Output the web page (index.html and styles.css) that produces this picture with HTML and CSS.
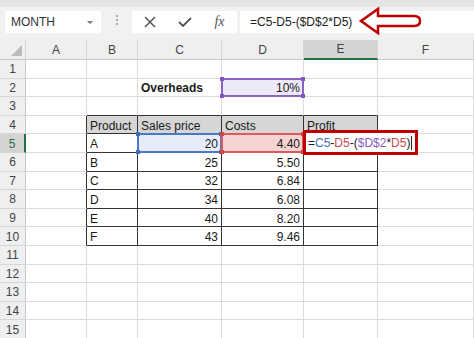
FILE: index.html
```html
<!DOCTYPE html>
<html lang="en">
<head>
    <meta charset="UTF-8">
    <title>Profit formula</title>
    <link rel="stylesheet" href="styles.css">
</head>
<body>

<div class="toolbar">
    <div class="namebox"><span>MONTH</span><span class="caret"></span></div>
    <div class="grip"><i></i><i></i><i></i></div>
    <div class="fbtns">
        <svg width="12" height="12" viewBox="0 0 12 12"><path d="M1 1 L11 11 M11 1 L1 11" stroke="#555" stroke-width="1.5" fill="none"/></svg>
        <svg width="14" height="10" viewBox="0 0 14 10"><path d="M1 5 L5 9 L13 1" stroke="#555" stroke-width="1.8" fill="none"/></svg>
        <span class="fx">fx</span>
    </div>
    <div class="fbar">=C5-D5-($D$2*D5)</div>
    <svg class="arrow" width="68" height="38" viewBox="356 2 68 38">
        <path d="M361 21 L378 9 L378 16 L414 16 Q420 16 420 21 Q420 26 414 26 L378 26 L378 33 Z" fill="#fff" stroke="#c00000" stroke-width="2.5" stroke-linejoin="miter"/>
    </svg>
</div>

<div class="sheet">
    <div class="h corner"></div>
    <div class="h">A</div><div class="h">B</div><div class="h">C</div><div class="h">D</div><div class="h sel">E</div><div class="h">F</div>

    <div class="rh">1</div>
    <div class="c"></div><div class="c"></div><div class="c"></div><div class="c"></div><div class="c"></div><div class="c"></div>

    <div class="rh">2</div>
    <div class="c"></div><div class="c"></div><div class="c bold">Overheads</div>
    <div class="c num ref"><span class="hl purple"></span><span class="val">10%</span></div>
    <div class="c"></div><div class="c"></div>

    <div class="rh">3</div>
    <div class="c"></div><div class="c tt"></div><div class="c tt"></div><div class="c tt"></div><div class="c tt"></div><div class="c"></div>

    <div class="rh">4</div>
    <div class="c tl"></div><div class="c t th">Product</div><div class="c t th">Sales price</div><div class="c t th">Costs</div><div class="c t th">Profit</div><div class="c"></div>

    <div class="rh sel">5</div>
    <div class="c tl"></div><div class="c t">A</div>
    <div class="c t num ref"><span class="hl blue"></span><span class="val">20</span></div>
    <div class="c t num ref"><span class="hl red"></span><span class="val">4.40</span></div>
    <div class="c t ref">
        <div class="editor">=<b class="r-blue">C5</b>-<b class="r-red">D5</b>-(<b class="r-purple">$D$2</b>*<b class="r-red">D5</b>)<span class="cursor"></span></div>
    </div>
    <div class="c"></div>

    <div class="rh">6</div>
    <div class="c tl"></div><div class="c t">B</div><div class="c t num">25</div><div class="c t num">5.50</div><div class="c t"></div><div class="c"></div>

    <div class="rh">7</div>
    <div class="c tl"></div><div class="c t">C</div><div class="c t num">32</div><div class="c t num">6.84</div><div class="c t"></div><div class="c"></div>

    <div class="rh">8</div>
    <div class="c tl"></div><div class="c t">D</div><div class="c t num">34</div><div class="c t num">6.08</div><div class="c t"></div><div class="c"></div>

    <div class="rh">9</div>
    <div class="c tl"></div><div class="c t">E</div><div class="c t num">40</div><div class="c t num">8.20</div><div class="c t"></div><div class="c"></div>

    <div class="rh">10</div>
    <div class="c tl"></div><div class="c t">F</div><div class="c t num">43</div><div class="c t num">9.46</div><div class="c t"></div><div class="c"></div>

    <div class="rh">11</div>
    <div class="c"></div><div class="c"></div><div class="c"></div><div class="c"></div><div class="c"></div><div class="c"></div>

    <div class="rh">12</div>
    <div class="c"></div><div class="c"></div><div class="c"></div><div class="c"></div><div class="c"></div><div class="c"></div>

    <div class="rh">13</div>
    <div class="c"></div><div class="c"></div><div class="c"></div><div class="c"></div><div class="c"></div><div class="c"></div>

    <div class="rh">14</div>
    <div class="c"></div><div class="c"></div><div class="c"></div><div class="c"></div><div class="c"></div><div class="c"></div>

    <div class="rh">15</div>
    <div class="c"></div><div class="c"></div><div class="c"></div><div class="c"></div><div class="c"></div><div class="c"></div>
</div>

</body>
</html>
```

FILE: styles.css
```css
* {
    box-sizing: border-box;
}

body {
    margin: 0;
    width: 474px;
    height: 338px;
    overflow: hidden;
    font-family: "Liberation Sans", Arial, sans-serif;
    font-size: 12px;
    background-color: #fff;
    color: #1a1a1a;
}

/* formula bar area */

.toolbar {
    position: relative;
    height: 40px;
    display: flex;
    align-items: flex-start;
    padding-top: 4px;
    border-top: 7px solid #e4e4e4;
    background-color: #f1f1f1;
}

.namebox {
    margin-left: 5px;
    width: 96px;
    height: 22px;
    padding: 0 6px;
    display: flex;
    align-items: center;
    justify-content: space-between;
    background-color: #fff;
    color: #333;
}

.caret {
    margin-right: 2px;
    border-left: 3px solid transparent;
    border-right: 3px solid transparent;
    border-top: 3px solid #777;
}

.grip {
    margin: 4px 0 0 15px;
    width: 3px;
    display: flex;
    flex-direction: column;
    gap: 2px;
}

.grip i {
    width: 2px;
    height: 2px;
    background-color: #aaa;
}

.fbtns {
    margin-left: 13px;
    width: 105px;
    height: 22px;
    display: grid;
    grid-template-columns: repeat(3, 35px);
    justify-items: center;
    align-items: center;
    background-color: #fff;
}

.fx {
    font-family: "Liberation Serif", "Times New Roman", serif;
    font-style: italic;
    font-size: 14px;
    color: #555;
}

.fbar {
    margin-left: 3px;
    flex: 1;
    height: 22px;
    padding-left: 10px;
    display: flex;
    align-items: center;
    background-color: #fff;
    color: #222;
}

.arrow {
    position: absolute;
    left: 356px;
    top: -5px;
}

/* grid */

.sheet {
    display: grid;
    grid-template-columns: 26px 61px 51px 84px 82px 74px 96px;
    grid-template-rows: 20px;
    grid-auto-rows: 18.6px;
}

.h {
    display: flex;
    align-items: center;
    justify-content: center;
    background-color: #efefef;
    border-right: 1px solid #d6d6d6;
    border-bottom: 1px solid #c9c9c9;
    color: #444;
}

.h.sel {
    background-color: #d4d4d4;
    border-bottom: 2px solid #217346;
}

.corner {
    position: relative;
}

.corner::after {
    content: "";
    position: absolute;
    right: 3px;
    bottom: 3px;
    border-left: 11px solid transparent;
    border-bottom: 11px solid #bcbcbc;
}

.rh {
    display: flex;
    align-items: center;
    justify-content: center;
    padding-top: 1px;
    background-color: #efefef;
    border-right: 1px solid #c9c9c9;
    border-bottom: 1px solid #d6d6d6;
    color: #444;
}

.rh.sel {
    background-color: #d4d4d4;
    border-right: 2px solid #217346;
    color: #2f6b47;
}

.c {
    display: flex;
    align-items: center;
    padding: 2px 3px 0;
    white-space: nowrap;
    border-right: 1px solid #dcdcdc;
    border-bottom: 1px solid #dcdcdc;
}

.num {
    justify-content: flex-end;
}

.bold {
    font-weight: bold;
}

/* data table borders */

.t {
    border-right-color: #333;
    border-bottom-color: #333;
}

.tl {
    border-right-color: #333;
}

.tt {
    border-bottom-color: #333;
}

.th {
    background-color: #d6d6d6;
}

/* range highlights */

.ref {
    position: relative;
}

.val {
    position: relative;
    z-index: 2;
}

.hl {
    position: absolute;
    z-index: 1;
    top: -1px;
    left: -1px;
    right: -1px;
    bottom: -1px;
    border: 2px solid;
}

.hl::before {
    content: "";
    position: absolute;
    top: -3px;
    left: -3px;
    right: -3px;
    bottom: -3px;
    background:
        linear-gradient(currentColor, currentColor) left top / 4px 4px no-repeat,
        linear-gradient(currentColor, currentColor) right top / 4px 4px no-repeat,
        linear-gradient(currentColor, currentColor) left bottom / 4px 4px no-repeat,
        linear-gradient(currentColor, currentColor) right bottom / 4px 4px no-repeat;
}

.purple {
    color: #7f56c2;
    border-color: #8a63c8;
    background-color: #eee9f6;
}

.blue {
    color: #3f6fc0;
    border-color: #4a78c6;
    background-color: #e7edf8;
}

.red {
    color: #d04545;
    border-color: #dc5c5c;
    background-color: #f5d3d3;
}

.editor {
    position: absolute;
    z-index: 3;
    top: -4px;
    left: -1px;
    width: 115px;
    height: 25px;
    padding: 1px 0 0 2px;
    display: flex;
    align-items: center;
    border: 3px solid #c00000;
    background-color: #fff;
    color: #222;
}

.editor b {
    font-weight: normal;
}

.r-blue {
    color: #3f6fc0;
}

.r-red {
    color: #cc4a4a;
}

.r-purple {
    color: #8a5cc6;
}

.cursor {
    margin-left: 1px;
    width: 1px;
    height: 14px;
    background-color: #222;
}
```
